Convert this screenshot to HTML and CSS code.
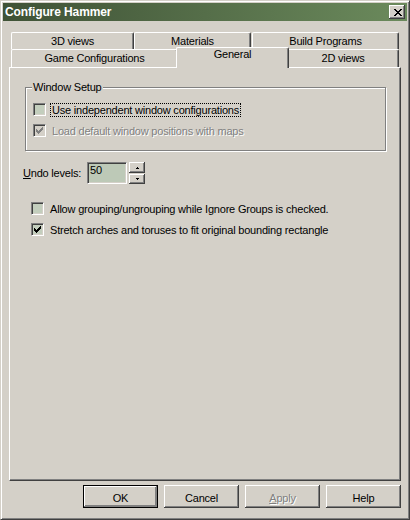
FILE: index.html
```html
<!DOCTYPE html>
<html>
<head>
<meta charset="utf-8">
<link rel="stylesheet" href="styles.css">
</head>
<body>
<div class="window">
  <div class="titlebar">
    <span class="title">Configure Hammer</span>
    <div class="close">
      <svg width="8" height="7" viewBox="0 0 8 7" shape-rendering="crispEdges"><path fill="#000" d="M0 0h2v1h-2z M6 0h2v1h-2z M1 1h2v1h-2z M5 1h2v1h-2z M2 2h4v1h-4z M3 3h2v1h-2z M2 4h4v1h-4z M1 5h2v1h-2z M5 5h2v1h-2z M0 6h2v1h-2z M6 6h2v1h-2z"/></svg>
    </div>
  </div>
  <div class="content">
    <div class="tabs">
      <div class="tabrow back">
        <div class="tab t-3d">3D views</div>
        <div class="tab t-mat">Materials</div>
        <div class="tab t-build">Build Programs</div>
      </div>
      <div class="tabrow front">
        <div class="tab t-game">Game Configurations</div>
        <div class="tab t-gen selected">General</div>
        <div class="tab t-2d">2D views</div>
      </div>
    </div>
    <div class="panel">
      <div class="group">
        <span class="legend">Window Setup</span>
        <div class="cbrow">
          <span class="checkbox"></span>
          <span class="label focus">Use independent window configurations</span>
        </div>
        <div class="cbrow">
          <span class="checkbox disabled">
            <svg width="7" height="7" viewBox="0 0 7 7" shape-rendering="crispEdges"><path fill="#808080" d="M6 0h1v1h-1z M5 1h2v1h-2z M0 2h1v1h-1z M4 2h3v1h-3z M0 3h2v1h-2z M3 3h3v1h-3z M0 4h5v1h-5z M1 5h3v1h-3z M2 6h1v1h-1z"/></svg>
          </span>
          <span class="label dis">Load default window positions with maps</span>
        </div>
      </div>
      <div class="undo">
        <span class="undo-label"><u>U</u>ndo levels:</span>
        <span class="edit">50</span>
        <span class="spin">
          <span class="spinbtn"><svg width="3" height="2" viewBox="0 0 3 2" shape-rendering="crispEdges"><path fill="#000" d="M1 0h1v1h-1z M0 1h3v1h-3z"/></svg></span>
          <span class="spinbtn down"><svg width="3" height="2" viewBox="0 0 3 2" shape-rendering="crispEdges"><path fill="#000" d="M0 0h3v1h-3z M1 1h1v1h-1z"/></svg></span>
        </span>
      </div>
      <div class="options">
        <div class="cbrow">
          <span class="checkbox"></span>
          <span class="label">Allow grouping/ungrouping while Ignore Groups is checked.</span>
        </div>
        <div class="cbrow">
          <span class="checkbox">
            <svg width="7" height="7" viewBox="0 0 7 7" shape-rendering="crispEdges"><path fill="#000" d="M6 0h1v1h-1z M5 1h2v1h-2z M0 2h1v1h-1z M4 2h3v1h-3z M0 3h2v1h-2z M3 3h3v1h-3z M0 4h5v1h-5z M1 5h3v1h-3z M2 6h1v1h-1z"/></svg>
          </span>
          <span class="label">Stretch arches and toruses to fit original bounding rectangle</span>
        </div>
      </div>
    </div>
    <div class="buttons">
      <div class="btn default">OK</div>
      <div class="btn">Cancel</div>
      <div class="btn dis"><u>A</u>pply</div>
      <div class="btn">Help</div>
    </div>
  </div>
</div>
</body>
</html>
```

FILE: styles.css
```css
* { box-sizing: border-box; }
html, body { margin: 0; padding: 0; background: #D4D0C8; }
body {
  font-family: "Liberation Sans", Arial, sans-serif;
  font-size: 11px;
  line-height: 13px;
  letter-spacing: -0.2px;
  color: #000;
}
.window {
  width: 410px;
  height: 520px;
  border: 1px solid;
  border-color: #D4D0C8 #404040 #404040 #D4D0C8;
  padding: 2px;
  box-shadow: inset 1px 1px #fff, inset -1px -1px #808080;
  display: flex;
  flex-direction: column;
}
.titlebar {
  height: 18px;
  flex: none;
  background: linear-gradient(to right, #3F5236, #6B8A5C);
  display: flex;
  align-items: center;
  justify-content: space-between;
  padding: 0 2px;
}
.title {
  color: #fff;
  font-weight: bold;
  font-size: 12px;
  letter-spacing: -0.1px;
}
.close {
  width: 16px;
  height: 14px;
  background: #D4D0C8;
  box-shadow: inset -1px -1px #404040, inset 1px 1px #fff, inset -2px -2px #808080;
  display: flex;
  align-items: center;
  justify-content: center;
  padding-left: 1px;
}
.close svg { display: block; }
.content {
  flex: 1;
  padding: 11px 6px 0 6px;
  display: flex;
  flex-direction: column;
}
.tabs { flex: none; }
.tabrow { display: flex; margin: 0 2px; }
.tabrow.back { height: 17px; }
.tabrow.front { height: 18px; }
.tab {
  flex: none;
  height: 100%;
  border-top: 1px solid #fff;
  border-left: 1px solid #fff;
  border-right: 1px solid #404040;
  box-shadow: inset -1px 0 #808080;
  border-radius: 2px 2px 0 0;
  text-align: center;
  padding-top: 2px;
  background: #D4D0C8;
  white-space: nowrap;
}
.t-3d { width: 123px; }
.t-mat { width: 117px; margin-right: 1px; }
.t-build { width: 147px; }
.t-game { width: 167px; }
.t-gen { width: 109px; }
.t-2d { width: 112px; }
.tab.selected {
  width: 113px;
  height: 21px;
  margin: -2px -2px 0 -2px;
  padding-top: 0;
  position: relative;
  z-index: 2;
}
.panel {
  flex: none;
  height: 414px;
  border: 1px solid;
  border-color: #fff #404040 #404040 #fff;
  box-shadow: inset -1px -1px #808080;
  display: flex;
  flex-direction: column;
  align-items: flex-start;
}
.group {
  margin: 19px 0 0 15px;
  width: 361px;
  height: 64px;
  border: 1px solid #808080;
  box-shadow: inset 1px 1px #fff, 1px 1px #fff;
  position: relative;
  padding: 15px 0 0 7px;
}
.legend {
  position: absolute;
  top: -7px;
  left: 6px;
  padding: 0 1px;
  background: #D4D0C8;
}
.cbrow {
  display: flex;
  align-items: center;
  height: 14px;
  margin-bottom: 7px;
}
.checkbox {
  flex: none;
  width: 13px;
  height: 13px;
  align-self: flex-start;
  border: 1px solid;
  border-color: #808080 #fff #fff #808080;
  box-shadow: inset 1px 1px #404040, inset -1px -1px #D4D0C8;
  background: #C3CEBD;
  display: flex;
  align-items: center;
  justify-content: center;
}
.checkbox svg { display: block; }
.checkbox.disabled { background: #D4D0C8; }
.label {
  margin-left: 4px;
  border: 1px dotted transparent;
  padding: 0 1px;
  height: 14px;
  white-space: nowrap;
}
.label.focus { border-color: #000; }
.dis {
  color: #808080;
  text-shadow: 1px 1px #fff;
}
.undo {
  display: flex;
  align-items: center;
  margin: 11px 0 0 13px;
  height: 22px;
}
.undo-label { width: 64px; white-space: nowrap; }
.edit {
  width: 40px;
  height: 22px;
  border: 1px solid;
  border-color: #808080 #fff #fff #808080;
  box-shadow: inset 1px 1px #404040, inset -1px -1px #D4D0C8;
  background: #BDC9B7;
  padding: 1px 2px 0 2px;
}
.spin {
  margin-left: 2px;
  display: flex;
  flex-direction: column;
  gap: 1px;
  height: 22px;
}
.spinbtn {
  width: 16px;
  height: 11px;
  background: #D4D0C8;
  box-shadow: inset -1px -1px #404040, inset 1px 1px #fff, inset -2px -2px #808080;
  display: flex;
  align-items: center;
  justify-content: center;
}
.spinbtn.down { height: 10px; }
.spinbtn svg { display: block; }
.options { margin: 18px 0 0 21px; }
.buttons {
  display: flex;
  justify-content: flex-end;
  gap: 6px;
  margin-top: 4px;
}
.btn {
  width: 75px;
  height: 23px;
  box-shadow: inset -1px -1px #404040, inset 1px 1px #fff, inset -2px -2px #808080;
  display: flex;
  align-items: center;
  justify-content: center;
  padding-top: 3px;
}
.btn.default {
  border: 1px solid #000;
  box-shadow: inset -1px -1px #808080, inset 1px 1px #fff, inset -2px -2px #808080;
}
```
